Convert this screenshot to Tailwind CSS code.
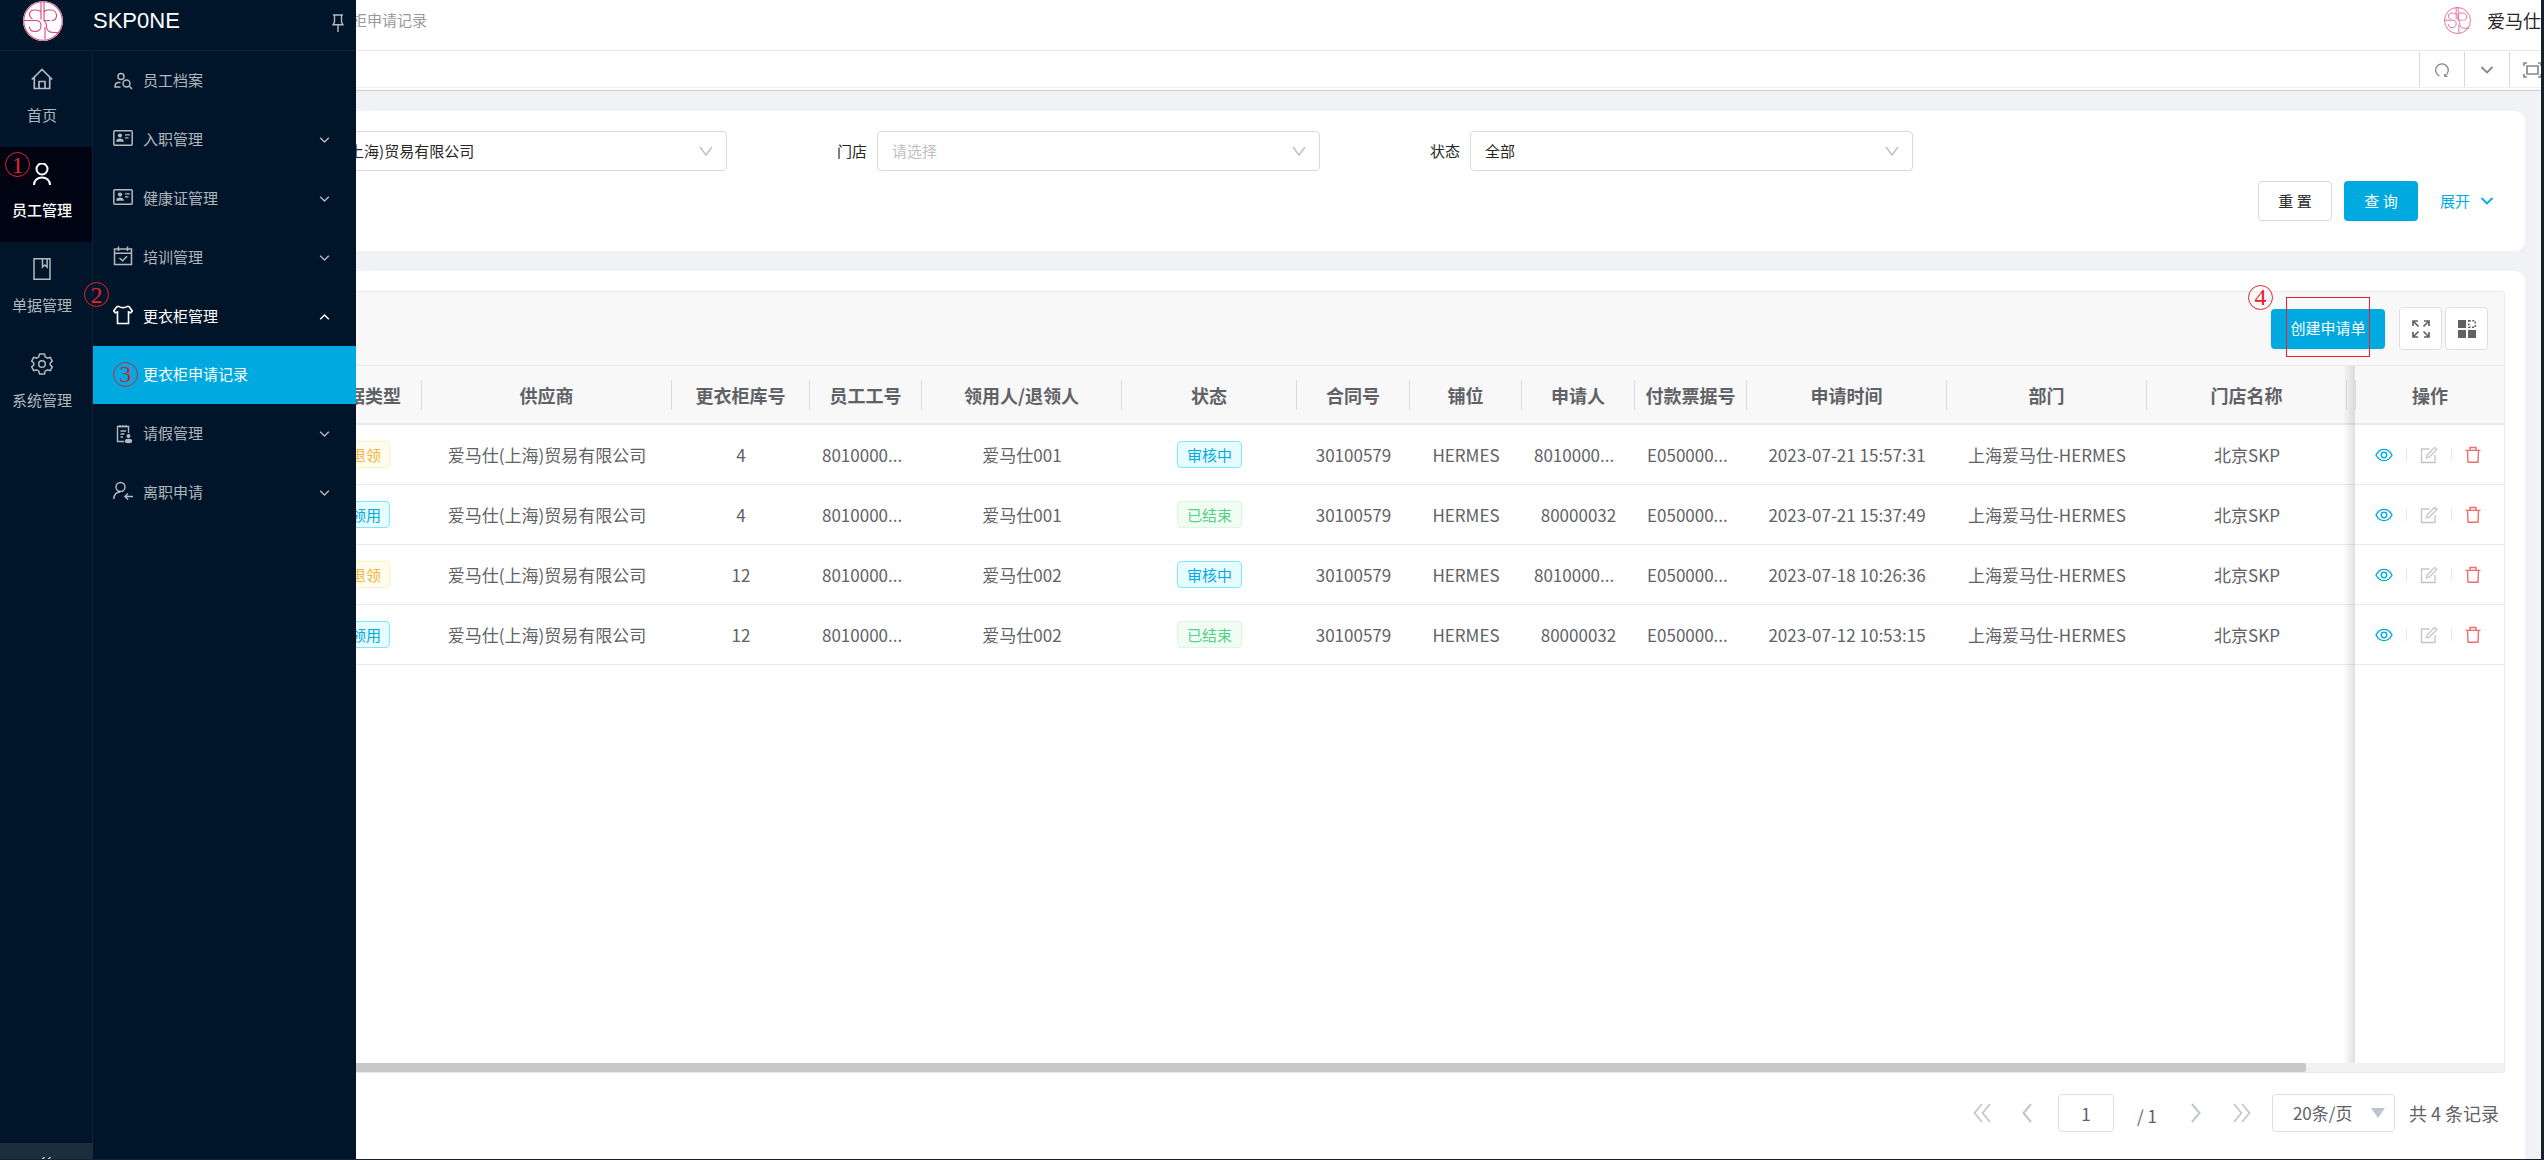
<!DOCTYPE html>
<html lang="zh-CN">
<head>
<meta charset="utf-8">
<title>SKP0NE</title>
<script src="https://cdn.jsdelivr.net/npm/@tailwindcss/browser@4"></script>
</head>
<body class="flex h-screen overflow-hidden border-r-[3px] border-b border-[#17212b] bg-[#f0f2f5] font-['Noto_Sans_CJK_SC',sans-serif] text-[15px] text-[#262626]">
<svg class="hidden">
  <symbol id="down" viewBox="0 0 14 10"><path d="M1.5 2 7 7.5 12.5 2" fill="none" stroke="currentColor" stroke-width="1.8"/></symbol>
  <symbol id="vee" viewBox="0 0 14 12"><path d="M1 2 7 10 13 2" fill="none" stroke="currentColor" stroke-width="1.4"/></symbol>
  <symbol id="logo" viewBox="0 0 40 40">
    <g fill="none" stroke="#d9437f" stroke-width="1.1">
      <circle cx="20" cy="20" r="19.3"/>
      <path d="M18 1v17.5M21 1v17.500M1 19.500h11.500c4.500 0 5.500 2.500 5.500 5 0 4-2.500 6-6 6s-5.500-2-5.500-5M18.500 11.500c-1.500-2-4-2.500-6.500-2.500-3.500 0-5.500 2-5.500 4.500 0 2 1.200 3.500 3 4.500M27 19.500h-6v-7c0-2.500 1.500-3.500 4-3.500h3c3.500 0 5.500 2.500 5.500 5.500s-2 5-5 5M21 20c2 1 2.500 3 2.500 5.500 0 4 2.500 6 7 6h7M22 26v12.500"/>
    </g>
  </symbol>
  <symbol id="card" viewBox="0 0 20 16"><rect x=".8" y=".8" width="18.400" height="14.400" rx="1" fill="none" stroke="currentColor" stroke-width="1.5"/><circle cx="7" cy="5.500" r="2.100" fill="currentColor"/><path d="M3.200 11.800c0-2.300 1.500-3.300 3.800-3.300s3.800 1 3.800 3.300zM12 4.200h5v1.400h-5zM12 7.200h3.500v1.300H12z" fill="currentColor"/></symbol>
  <symbol id="eye" viewBox="0 0 18 14"><g fill="none" stroke="currentColor" stroke-width="1.400"><path d="M1 7c2-3.800 4.700-5.600 8-5.600S15 3.200 17 7c-2 3.800-4.700 5.600-8 5.600S3 10.800 1 7z"/><circle cx="9" cy="7" r="2.700"/></g></symbol>
  <symbol id="edit" viewBox="0 0 18 18"><g fill="none" stroke="currentColor" stroke-width="1.300"><path d="M9.500 3H1.500v13.500h13.500V9"/><path d="M6.500 11.800 7 9l7.700-7.700 2.200 2.200L9.200 11.200z"/></g></symbol>
  <symbol id="trash" viewBox="0 0 16 18"><g fill="none" stroke="currentColor" stroke-width="1.400"><path d="M.5 4.400h15M2.500 4.400 3 16.300h10l.5-11.900M5 4.200V1.500h6v2.700"/></g></symbol>
</svg>

<aside class="flex w-[356px] shrink-0 flex-col bg-[#001529] text-white/70">
  <div class="flex h-[51px] shrink-0 items-center border-b border-[#0e2234] pr-3 pb-2 pl-[23px]">
    <svg class="h-10 w-10 shrink-0 rounded-full bg-white"><use href="#logo"/></svg>
    <h1 class="ml-[30px] flex-1 font-['Liberation_Sans',sans-serif] text-[22px] leading-6 text-white">SKP0NE</h1>
    <button aria-label="固定" class="mt-1"><svg class="h-[18px] w-3" viewBox="0 0 12 18" fill="none" stroke="currentColor" stroke-width="1.400"><path d="M1 1h10M2.500 1v7L1 10.800h10L9.500 8V1M6 11v7"/></svg></button>
  </div>
  <div class="flex min-h-0 flex-1">
    <div class="flex w-[93px] flex-col">
      <nav class="flex flex-1 flex-col border-r border-[#0e2234] pt-px text-center leading-[22px]">
        <a href="#" class="flex h-[95px] flex-col items-center gap-3.5 pt-4 pr-2">
          <svg class="h-[22px] w-[22px]" viewBox="0 0 22 22" fill="none" stroke="currentColor" stroke-width="1.700"><path d="M.8 11.500 11 1.500l10.200 10M3.300 9.500v11h15.400v-11M8 20.500v-7h6v7"/></svg>首页</a>
        <a href="#" class="relative flex h-[95px] flex-col items-center gap-3.5 bg-[#000312] pt-4 pr-2 font-medium text-white">
          <svg class="h-[22px] w-[22px]" viewBox="0 0 22 22" fill="none" stroke="currentColor" stroke-width="2"><circle cx="11" cy="6" r="5.500"/><path d="M3 22c0-4.500 3.500-7.500 8-7.500s8 3 8 7.500"/></svg>员工管理
          <span class="absolute top-[5px] left-[5px] flex h-[25px] w-[25px] items-center justify-center rounded-full border border-[#e2232d] font-['Liberation_Serif',serif] text-2xl font-normal text-[#e2232d]">1</span></a>
        <a href="#" class="relative flex h-[95px] flex-col items-center gap-3.5 pt-4 pr-2">
          <svg class="h-[22px] w-[22px]" viewBox="0 0 22 22" fill="none" stroke="currentColor" stroke-width="1.500"><path d="M3 .8h16v20.500H3zM11.500 1v8l2.300-2 2.300 2V1"/></svg>单据管理
          <span class="absolute top-[40px] left-[84px] z-10 flex h-[25px] w-[25px] items-center justify-center rounded-full border border-[#e2232d] font-['Liberation_Serif',serif] text-2xl text-[#e2232d]">2</span></a>
        <a href="#" class="flex h-[95px] flex-col items-center gap-3.5 pt-4 pr-2">
          <svg class="h-[22px] w-[22px]" viewBox="0 0 22 22" fill="none" stroke="currentColor" stroke-width="1.500" stroke-linejoin="round"><path d="M8.500 1h5l.7 2.900 2.200 1.300 2.900-.9 2 3.800L19.200 10v2l2.100 1.900-2 3.800-2.900-.9-2.200 1.300-.7 2.900h-5l-.7-2.900-2.200-1.300-2.900.9-2-3.800L2.800 12v-2L.7 8.100l2-3.800 2.900.9 2.200-1.300z"/><circle cx="11" cy="11" r="3.300"/></svg>系统管理</a>
      </nav>
      <button aria-label="收起" class="flex h-4 items-start justify-center overflow-hidden bg-[#1c2d3e] pt-3.5 pr-[3px]"><svg class="h-3 w-3" viewBox="0 0 12 12" fill="none" stroke="currentColor" stroke-width="1.500"><path d="M5.500 0 1 5l4.500 5M11.500 0 7 5l4.500 5"/></svg></button>
    </div>
    <nav class="flex-1">
      <a href="#" class="flex h-[59px] items-center gap-2.5 pl-5"><svg class="h-5 w-5" viewBox="0 0 20 20" fill="none" stroke="currentColor" stroke-width="1.500"><circle cx="8" cy="5.500" r="3"/><path d="M7.500 11.500H5.500c-2.500 0-3.500 1.500-3.500 4.500h5.500M16.500 15.500 19 18"/><circle cx="13.500" cy="12.500" r="3.500"/></svg>员工档案</a>
      <a href="#" class="flex h-[59px] items-center gap-2.5 pr-[26px] pl-5"><svg class="mb-1 h-4 w-5"><use href="#card"/></svg><span class="flex-1">入职管理</span><svg class="h-2 w-[11px]"><use href="#down"/></svg></a>
      <a href="#" class="flex h-[59px] items-center gap-2.5 pr-[26px] pl-5"><svg class="mb-1 h-4 w-5"><use href="#card"/></svg><span class="flex-1">健康证管理</span><svg class="h-2 w-[11px]"><use href="#down"/></svg></a>
      <a href="#" class="flex h-[59px] items-center gap-2.5 pr-[26px] pl-5"><svg class="mb-1 h-5 w-5" viewBox="0 0 20 20" fill="none" stroke="currentColor" stroke-width="1.500"><path d="M1.500 3h17v15.500h-17zM1.500 7.200h17M5.500.500v4.500M14.500.500v4.500M6.500 12l3 2.800 4.500-4.500"/></svg><span class="flex-1">培训管理</span><svg class="h-2 w-[11px]"><use href="#down"/></svg></a>
      <a href="#" class="flex h-[59px] items-center gap-2.5 pr-[26px] pl-5 text-white"><svg class="mb-1 h-5 w-5" viewBox="0 0 20 20" fill="none" stroke="currentColor" stroke-width="1.600"><path d="M6 1.500c1.500 1.500 6.500 1.500 8 0h2l3.300 4.500-1.700 1.800-2.100-.8V18.500h-11V7l-2.100.8L.7 6 4 1.500z"/></svg><span class="flex-1">更衣柜管理</span><svg class="h-2 w-[11px] rotate-180"><use href="#down"/></svg></a>
      <a href="#" class="flex h-[58px] items-center gap-[5px] bg-[#00a9df] pb-0.5 pl-5 text-white"><span class="flex h-[25px] w-[25px] items-center justify-center rounded-full border border-[#c8283c] font-['Liberation_Serif',serif] text-2xl text-[#d02438]">3</span>更衣柜申请记录</a>
      <a href="#" class="flex h-[59px] items-center gap-2.5 pr-[26px] pl-5"><svg class="h-5 w-5" viewBox="0 0 20 20" fill="none" stroke="currentColor" stroke-width="1.400"><path d="M11 17.500H4.500v-15h11V9M7 1v2.500M10 1v2.500M13 1v2.500M7.500 7h5.500M7.500 10h4M7.500 13h2.500"/><circle cx="15.500" cy="12" r="2" fill="currentColor" stroke="none"/><ellipse cx="15.500" cy="17" rx="3.700" ry="2.200" fill="currentColor" stroke="none"/></svg><span class="flex-1">请假管理</span><svg class="h-2 w-[11px]"><use href="#down"/></svg></a>
      <a href="#" class="flex h-[59px] items-center gap-2.5 pr-[26px] pl-5"><svg class="mb-1 h-5 w-5" viewBox="0 0 20 20" fill="none" stroke="currentColor" stroke-width="1.500"><circle cx="7.500" cy="6" r="4.500"/><path d="M.8 18c.3-4.500 2.500-7 6.200-7M20 15.500h-8M15 12.500l-3 3 3 3"/></svg><span class="flex-1">离职申请</span><svg class="h-2 w-[11px]"><use href="#down"/></svg></a>
    </nav>
  </div>
</aside>

<main class="flex min-w-0 flex-1 flex-col">
  <header class="flex h-[51px] shrink-0 items-center justify-between overflow-hidden border-b border-[#e8e8e8] bg-white pb-[9px]">
    <div class="flex w-[71px] justify-end overflow-hidden whitespace-nowrap text-[#999]">柜申请记录</div>
    <div class="flex items-center gap-4 text-lg leading-6"><svg class="h-[27px] w-[27px]"><use href="#logo"/></svg><span class="pb-0.5">爱马仕</span></div>
  </header>
  <div class="flex h-10 shrink-0 flex-col border-b border-[#d0d0d0] bg-white pb-0.5">
    <div class="flex flex-1 justify-end border-b border-[#eee] pt-px text-[#888]">
      <button aria-label="刷新" class="flex w-[45px] items-center justify-center border-l border-[#d9d9d9]"><svg class="h-3.5 w-3.5" viewBox="0 0 14 14" fill="none" stroke="currentColor" stroke-width="1.300"><path d="M4.500 13A6.300 6.300 0 1 1 10 12.700M12.500 13.300H9.800V11"/></svg></button>
      <button aria-label="更多" class="flex w-[45px] items-center justify-center border-l border-[#d9d9d9]"><svg class="h-2.5 w-3.5"><use href="#down"/></svg></button>
      <button aria-label="全屏" class="flex w-8 items-center overflow-hidden border-l border-[#d9d9d9] pl-[13px]"><svg class="h-4 w-[19px] shrink-0" viewBox="0 0 19 16" fill="none" stroke="currentColor" stroke-width="1.700"><path d="M1 4V1h3M15 1h3v3M18 12v3h-3M4 15H1v-3M4 4h11v8H4z"/></svg></button>
    </div>
  </div>

  <div class="flex min-h-0 flex-1 flex-col gap-5 pt-5 pr-4">
    <section class="flex h-[140px] shrink-0 flex-col gap-2.5 rounded-r-[10px] bg-white pt-5 pr-5">
      <div class="grid grid-cols-[371fr_593fr_593fr_592fr]">
        <div class="relative flex h-10 overflow-hidden">
          <select aria-label="供应商" class="-ml-[72px] w-[calc(100%+72px)] appearance-none rounded border border-[#d9d9d9] bg-white pl-3.5"><option>爱马仕(上海)贸易有限公司</option></select>
          <svg class="pointer-events-none absolute top-3.5 right-3.5 h-3 w-3.5 text-[#bfbfbf]"><use href="#vee"/></svg>
        </div>
        <div class="relative flex h-10 items-center justify-end gap-2.5">
          <label for="store">门店</label>
          <select id="store" class="h-10 w-[443px] appearance-none rounded border border-[#d9d9d9] bg-white pl-3.5 text-[#bfbfbf]"><option>请选择</option></select>
          <svg class="pointer-events-none absolute top-3.5 right-3.5 h-3 w-3.5 text-[#bfbfbf]"><use href="#vee"/></svg>
        </div>
        <div class="relative flex h-10 items-center justify-end gap-2.5">
          <label for="status">状态</label>
          <select id="status" class="h-10 w-[443px] appearance-none rounded border border-[#d9d9d9] bg-white pl-3.5"><option>全部</option></select>
          <svg class="pointer-events-none absolute top-3.5 right-3.5 h-3 w-3.5 text-[#bfbfbf]"><use href="#vee"/></svg>
        </div>
      </div>
      <div class="flex justify-end gap-3 pr-[11px]">
        <button class="h-10 w-[74px] rounded border border-[#d9d9d9] bg-white">重 置</button>
        <button class="h-10 w-[74px] rounded bg-[#00a9df] text-white shadow-xs">查 询</button>
        <button class="ml-2.5 flex items-center gap-2.5 text-[#00a9df]">展开<svg class="h-2.5 w-3.5"><use href="#down"/></svg></button>
      </div>
    </section>

    <section class="flex min-h-0 flex-1 flex-col rounded-tr-[10px] bg-white pt-5 pr-5">
      <div class="flex min-h-0 flex-1 flex-col rounded-r border border-l-0 border-[#e8eaec] text-[#606266]">
        <div class="flex h-[74px] shrink-0 items-center justify-end gap-[3px] rounded-tr border-b border-[#e8eaec] bg-[#f8f8f9] pr-4">
          <div class="relative mr-[11px]">
            <button class="h-10 w-[114px] rounded bg-[#00a9df] text-white shadow-xs">创建申请单</button>
            <span class="pointer-events-none absolute -top-3 left-[15px] h-[60px] w-[84px] border border-[#e8202a]"></span>
            <span class="absolute -top-6 -left-[23px] flex h-[25px] w-[25px] items-center justify-center rounded-full border border-[#e8202a] font-['Liberation_Serif',serif] text-2xl text-[#e8202a]">4</span>
          </div>
          <button aria-label="最大化" class="flex h-[43px] w-[43px] items-center justify-center rounded border border-[#dcdfe6] bg-white"><svg class="h-[18px] w-[18px]" viewBox="0 0 18 18" fill="none" stroke="currentColor" stroke-width="1.700"><path d="M1 6V1h5M1 1l5.500 5.500M12 1h5v5M17 1l-5.500 5.500M1 12v5h5M1 17l5.500-5.500M17 12v5h-5M17 17l-5.500-5.500"/></svg></button>
          <button aria-label="列设置" class="flex h-[43px] w-[43px] items-center justify-center rounded border border-[#dcdfe6] bg-white"><svg class="h-[18px] w-[18px]" viewBox="0 0 18 18" fill="currentColor"><path d="M0 0h8v8H0zM0 10h8v8H0zM10 10h8v8h-8z"/><path d="M10.800.8h6.400v6.400h-6.400z" fill="none" stroke="currentColor" stroke-width="1.500" stroke-dasharray="2 1.500"/></svg></button>
        </div>
        <div class="relative min-h-0 flex-1 overflow-hidden">
          <table class="w-full table-fixed border-separate border-spacing-0 text-center text-[17px] leading-6 whitespace-nowrap">
            <colgroup><col class="w-[66px]"><col class="w-[250px]"><col class="w-[138px]"><col class="w-[112px]"><col class="w-[200px]"><col class="w-[175px]"><col class="w-[113px]"><col class="w-[112px]"><col class="w-[113px]"><col class="w-[112px]"><col class="w-[200px]"><col class="w-[200px]"><col class="w-[200px]"><col class="w-[8px]"><col class="w-[149px]"></colgroup>
            <thead class="bg-[#f8f8f9] text-lg">
              <tr class="h-[59px] *:border-b-2 *:border-[#e8eaec] *:p-0">
                <th><div class="flex h-[30px] items-center justify-end overflow-hidden border-r border-[#dcdcdc] pr-5">据类型</div></th>
                <th><div class="h-[30px] border-r border-[#dcdcdc] leading-[30px]">供应商</div></th>
                <th><div class="h-[30px] border-r border-[#dcdcdc] leading-[30px]">更衣柜库号</div></th>
                <th><div class="h-[30px] border-r border-[#dcdcdc] leading-[30px]">员工工号</div></th>
                <th><div class="h-[30px] border-r border-[#dcdcdc] leading-[30px]">领用人/退领人</div></th>
                <th><div class="h-[30px] border-r border-[#dcdcdc] leading-[30px]">状态</div></th>
                <th><div class="h-[30px] border-r border-[#dcdcdc] leading-[30px]">合同号</div></th>
                <th><div class="h-[30px] border-r border-[#dcdcdc] leading-[30px]">铺位</div></th>
                <th><div class="h-[30px] border-r border-[#dcdcdc] leading-[30px]">申请人</div></th>
                <th><div class="h-[30px] border-r border-[#dcdcdc] leading-[30px]">付款票据号</div></th>
                <th><div class="h-[30px] border-r border-[#dcdcdc] leading-[30px]">申请时间</div></th>
                <th><div class="h-[30px] border-r border-[#dcdcdc] leading-[30px]">部门</div></th>
                <th><div class="h-[30px] border-r border-[#dcdcdc] leading-[30px]">门店名称</div></th>
                <th></th>
                <th><div class="h-[30px] border-l border-[#dcdcdc] leading-[30px]">操作</div></th>
              </tr>
            </thead>
            <tbody>
              <tr class="h-[60px] *:border-b *:border-[#e8eaec] *:p-0">
                <td><div class="flex justify-end overflow-hidden pr-8"><span class="h-[27px] shrink-0 rounded border border-[#fff1b8] bg-[#fffdf0] px-2 text-[15px] leading-[25px] text-[#f2b343]">退领</span></div></td>
                <td>爱马仕(上海)贸易有限公司</td><td>4</td><td><div class="pl-3 text-left">8010000...</div></td><td>爱马仕001</td>
                <td><span class="inline-block h-[27px] rounded border border-[#7de9fa] bg-[#e6fcff] px-[9px] text-[15px] leading-[25px] text-[#00a9df]">审核中</span></td>
                <td>30100579</td><td>HERMES</td><td><div class="pl-3 text-left">8010000...</div></td><td><div class="pl-3 text-left">E050000...</div></td><td>2023-07-21 15:57:31</td><td>上海爱马仕-HERMES</td><td>北京SKP</td><td></td>
                <td><div class="flex items-center justify-center gap-[13px] pr-1"><button aria-label="查看" class="text-[#00a9df]"><svg class="h-3.5 w-[18px]"><use href="#eye"/></svg></button><i class="h-[13px] w-px bg-[#e8e8e8]"></i><button aria-label="编辑" class="text-[#c4c4c4]"><svg class="h-[18px] w-[18px]"><use href="#edit"/></svg></button><i class="h-[13px] w-px bg-[#e8e8e8]"></i><button aria-label="删除" class="text-[#ed6f6f]"><svg class="h-[18px] w-4"><use href="#trash"/></svg></button></div></td>
              </tr>
              <tr class="h-[60px] *:border-b *:border-[#e8eaec] *:p-0">
                <td><div class="flex justify-end overflow-hidden pr-8"><span class="h-[27px] shrink-0 rounded border border-[#7de9fa] bg-[#e6fcff] px-2 text-[15px] leading-[25px] text-[#00a9df]">领用</span></div></td>
                <td>爱马仕(上海)贸易有限公司</td><td>4</td><td><div class="pl-3 text-left">8010000...</div></td><td>爱马仕001</td>
                <td><span class="inline-block h-[27px] rounded border border-[#dcf7e2] bg-[#effdf2] px-[9px] text-[15px] leading-[25px] text-[#55d187]">已结束</span></td>
                <td>30100579</td><td>HERMES</td><td>80000032</td><td><div class="pl-3 text-left">E050000...</div></td><td>2023-07-21 15:37:49</td><td>上海爱马仕-HERMES</td><td>北京SKP</td><td></td>
                <td><div class="flex items-center justify-center gap-[13px] pr-1"><button aria-label="查看" class="text-[#00a9df]"><svg class="h-3.5 w-[18px]"><use href="#eye"/></svg></button><i class="h-[13px] w-px bg-[#e8e8e8]"></i><button aria-label="编辑" class="text-[#c4c4c4]"><svg class="h-[18px] w-[18px]"><use href="#edit"/></svg></button><i class="h-[13px] w-px bg-[#e8e8e8]"></i><button aria-label="删除" class="text-[#ed6f6f]"><svg class="h-[18px] w-4"><use href="#trash"/></svg></button></div></td>
              </tr>
              <tr class="h-[60px] *:border-b *:border-[#e8eaec] *:p-0">
                <td><div class="flex justify-end overflow-hidden pr-8"><span class="h-[27px] shrink-0 rounded border border-[#fff1b8] bg-[#fffdf0] px-2 text-[15px] leading-[25px] text-[#f2b343]">退领</span></div></td>
                <td>爱马仕(上海)贸易有限公司</td><td>12</td><td><div class="pl-3 text-left">8010000...</div></td><td>爱马仕002</td>
                <td><span class="inline-block h-[27px] rounded border border-[#7de9fa] bg-[#e6fcff] px-[9px] text-[15px] leading-[25px] text-[#00a9df]">审核中</span></td>
                <td>30100579</td><td>HERMES</td><td><div class="pl-3 text-left">8010000...</div></td><td><div class="pl-3 text-left">E050000...</div></td><td>2023-07-18 10:26:36</td><td>上海爱马仕-HERMES</td><td>北京SKP</td><td></td>
                <td><div class="flex items-center justify-center gap-[13px] pr-1"><button aria-label="查看" class="text-[#00a9df]"><svg class="h-3.5 w-[18px]"><use href="#eye"/></svg></button><i class="h-[13px] w-px bg-[#e8e8e8]"></i><button aria-label="编辑" class="text-[#c4c4c4]"><svg class="h-[18px] w-[18px]"><use href="#edit"/></svg></button><i class="h-[13px] w-px bg-[#e8e8e8]"></i><button aria-label="删除" class="text-[#ed6f6f]"><svg class="h-[18px] w-4"><use href="#trash"/></svg></button></div></td>
              </tr>
              <tr class="h-[60px] *:border-b *:border-[#e8eaec] *:p-0">
                <td><div class="flex justify-end overflow-hidden pr-8"><span class="h-[27px] shrink-0 rounded border border-[#7de9fa] bg-[#e6fcff] px-2 text-[15px] leading-[25px] text-[#00a9df]">领用</span></div></td>
                <td>爱马仕(上海)贸易有限公司</td><td>12</td><td><div class="pl-3 text-left">8010000...</div></td><td>爱马仕002</td>
                <td><span class="inline-block h-[27px] rounded border border-[#dcf7e2] bg-[#effdf2] px-[9px] text-[15px] leading-[25px] text-[#55d187]">已结束</span></td>
                <td>30100579</td><td>HERMES</td><td>80000032</td><td><div class="pl-3 text-left">E050000...</div></td><td>2023-07-12 10:53:15</td><td>上海爱马仕-HERMES</td><td>北京SKP</td><td></td>
                <td><div class="flex items-center justify-center gap-[13px] pr-1"><button aria-label="查看" class="text-[#00a9df]"><svg class="h-3.5 w-[18px]"><use href="#eye"/></svg></button><i class="h-[13px] w-px bg-[#e8e8e8]"></i><button aria-label="编辑" class="text-[#c4c4c4]"><svg class="h-[18px] w-[18px]"><use href="#edit"/></svg></button><i class="h-[13px] w-px bg-[#e8e8e8]"></i><button aria-label="删除" class="text-[#ed6f6f]"><svg class="h-[18px] w-4"><use href="#trash"/></svg></button></div></td>
              </tr>
            </tbody>
          </table>
          <div class="pointer-events-none absolute top-0 right-[149px] bottom-0 w-3 bg-linear-to-r from-black/0 to-black/12"></div>
        </div>
        <div class="h-[9px] shrink-0 bg-[#f1f1f1] pr-[198px]"><div class="h-full rounded-r-xs bg-[#c6c7c9]"></div></div>
      </div>
      <div class="flex h-[86px] shrink-0 items-start justify-end pt-[21px] pr-1.5 text-[17px] text-[#606266]">
        <button aria-label="首页" class="flex h-[38px] items-center text-[#c0c4cc]"><svg class="h-5 w-[18px]" viewBox="0 0 18 20" fill="none" stroke="currentColor" stroke-width="1.600"><path d="M9 1 1.500 10 9 19M17 1 9.500 10 17 19"/></svg></button>
        <button aria-label="上一页" class="ml-[31px] flex h-[38px] items-center text-[#c0c4cc]"><svg class="h-5 w-2.5" viewBox="0 0 10 20" fill="none" stroke="currentColor" stroke-width="2"><path d="M9 1 1.500 10 9 19"/></svg></button>
        <input aria-label="页码" value="1" class="ml-[26px] h-[38px] w-14 rounded border border-[#dcdfe6] text-center">
        <span class="ml-[23px] w-[22px] pt-[3px] leading-[38px] whitespace-nowrap">/ 1</span>
        <button aria-label="下一页" class="ml-8 flex h-[38px] items-center text-[#c0c4cc]"><svg class="h-5 w-2.5 rotate-180" viewBox="0 0 10 20" fill="none" stroke="currentColor" stroke-width="2"><path d="M9 1 1.500 10 9 19"/></svg></button>
        <button aria-label="末页" class="ml-8 flex h-[38px] items-center text-[#c0c4cc]"><svg class="h-5 w-[18px] rotate-180" viewBox="0 0 18 20" fill="none" stroke="currentColor" stroke-width="1.600"><path d="M9 1 1.500 10 9 19M17 1 9.500 10 17 19"/></svg></button>
        <div class="relative ml-[21px]">
          <select aria-label="每页条数" class="h-[38px] w-[123px] appearance-none rounded border border-[#dcdfe6] bg-white pl-5"><option>20条/页</option></select>
          <svg class="pointer-events-none absolute top-3.5 right-2.5 h-2.5 w-3.5 text-[#c0c4cc]" viewBox="0 0 14 10"><path d="M0 0h14L7 10z" fill="currentColor"/></svg>
        </div>
        <span class="ml-3.5 text-lg leading-[38px]">共 4 条记录</span>
      </div>
    </section>
  </div>
</main>
</body>
</html>
